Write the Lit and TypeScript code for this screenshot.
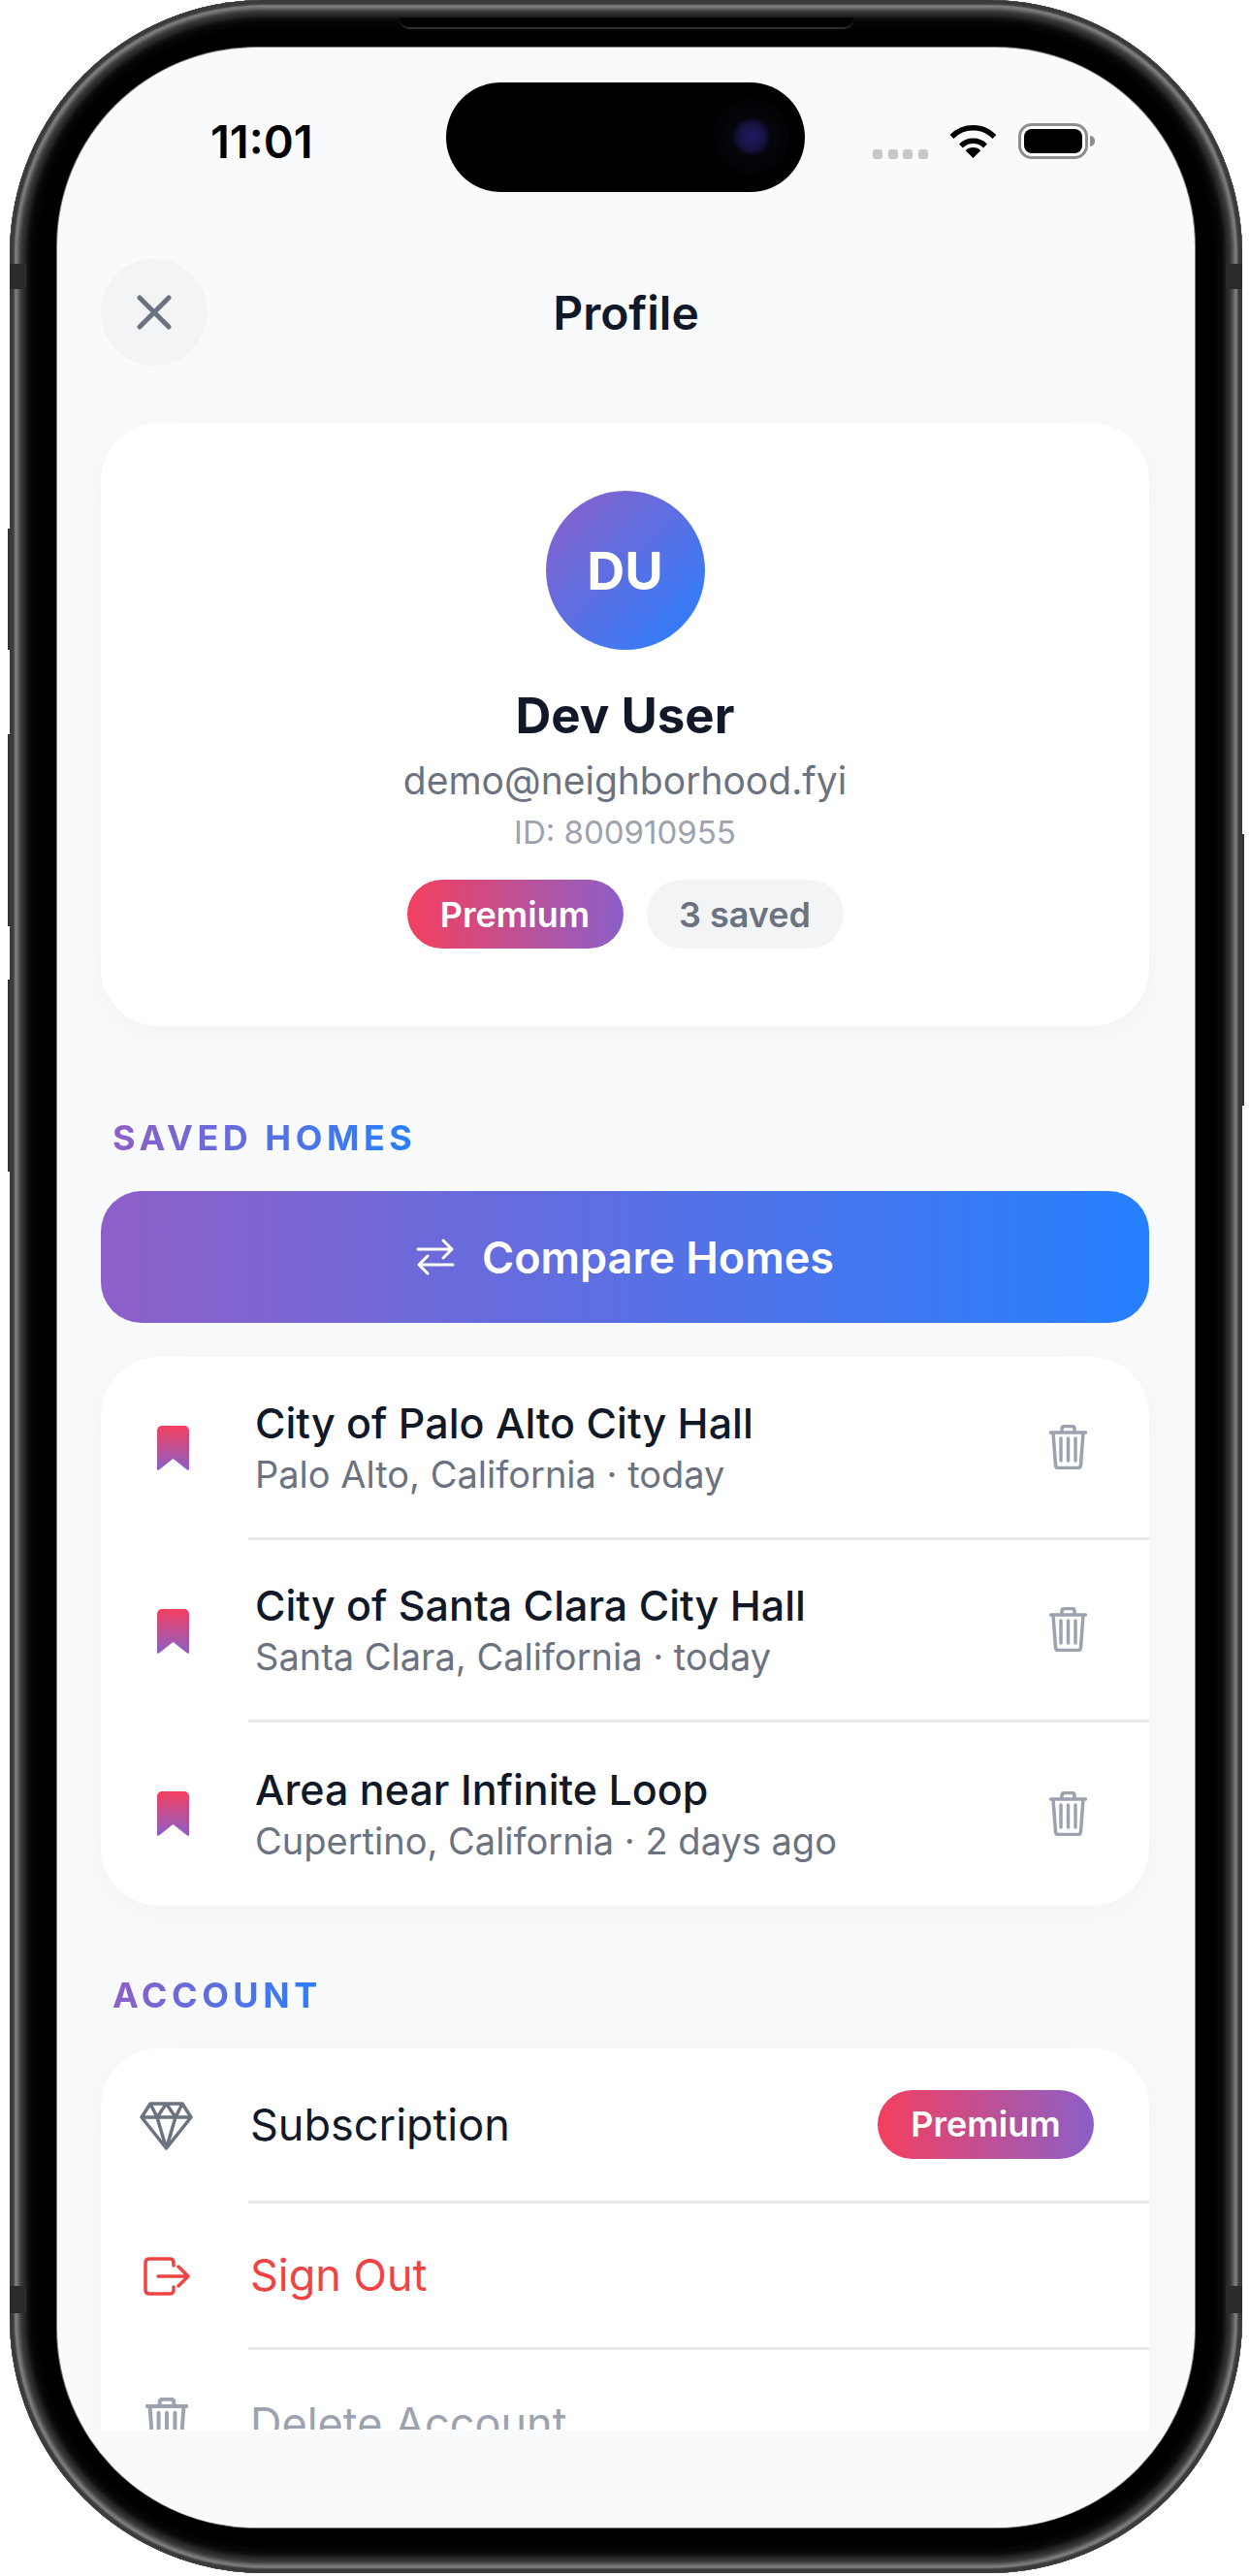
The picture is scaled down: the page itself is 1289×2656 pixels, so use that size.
import { LitElement, html, css, svg } from 'lit';
import { customElement } from 'lit/decorators.js';

const homes = [
  { name: 'City of Palo Alto City Hall', place: 'Palo Alto, California · today' },
  { name: 'City of Santa Clara City Hall', place: 'Santa Clara, California · today' },
  { name: 'Area near Infinite Loop', place: 'Cupertino, California · 2 days ago' },
];

const bookmark = (id: number) => html`
  <svg class="bookmark" viewBox="0 0 33 46" width="33" height="46">
    <defs>
      <linearGradient id="bm${id}" x1="0" y1="0" x2="0" y2="1">
        <stop offset="0" stop-color="#f43f5e"></stop>
        <stop offset="1" stop-color="#8b5fc8"></stop>
      </linearGradient>
    </defs>
    <path fill="url(#bm${id})" d="M5 0H28A5 5 0 0 1 33 5V44.5Q33 46.5 31 45.5L16.500 34L2 45.500Q0 46.500 0 44.500V5A5 5 0 0 1 5 0Z"></path>
  </svg>
`;

const trash = svg`
  <path d="M1.500 8H37.500M13 8V4.500Q13 1.500 16 1.500H23Q26 1.500 26 4.500V8M4 8L6.500 41.500Q6.700 44.500 9.500 44.500H29.500Q32.300 44.500 32.500 41.500L35 8M12 14V37M19.500 14V37M27 14V37"></path>
`;

@customElement('app-root')
class AppRoot extends LitElement {
  static styles = css`
    :host {
      display: block;
      width: 1289px;
      height: 2656px;
      background: #fff;
      font-family: Inter, 'Liberation Sans', sans-serif;
      color: #111827;
      overflow: hidden;
    }
    .frame {
      position: relative;
      box-sizing: border-box;
      width: 1271.5px;
      height: 2653px;
      margin-left: 9.5px;
      padding: 49px 49px 47px 49.5px;
      border-radius: 262px;
      background: #000;
      box-shadow:
        inset 0 0 2px 5px #3a3a3a,
        inset 0 0 4px 9px #8c8c8c,
        inset 0 0 5px 17px #343434,
        inset 0 0 6px 25px #0a0a0a;
    }
    .slit {
      position: absolute;
      left: 402px;
      top: 18px;
      width: 468px;
      height: 10px;
      background: #000;
      border-bottom: 2px solid #2e2e2e;
      border-radius: 0 0 10px 10px;
    }
    .band {
      position: absolute;
      width: 17px;
      background: #2a2a2a;
    }
    .side {
      position: absolute;
      width: 2px;
      background: #333;
    }
    .screen {
      display: flex;
      flex-direction: column;
      height: 100%;
      background: #f9fafb;
      border-radius: 205px;
      overflow: hidden;
      box-shadow: 0 0 0 1px #777;
    }
    .island {
      position: absolute;
      left: 450.5px;
      top: 85px;
      width: 370px;
      height: 113px;
      border-radius: 57px;
      background: #000;
    }
    .lens {
      position: absolute;
      left: 276px;
      top: 17px;
      width: 78px;
      height: 78px;
      border-radius: 50%;
      background: radial-gradient(circle, #231a63 0, #16123f 14px, #05050c 20px, #030305 39px);
    }
    .status {
      display: flex;
      align-items: flex-start;
      height: 121px;
      flex: none;
      padding: 78px 0 0 158px;
      box-sizing: border-box;
    }
    .time {
      font-size: 47px;
      line-height: 37px;
      font-weight: 600;
      color: #000;
      width: 683px;
    }
    .dots {
      display: flex;
      gap: 5.500px;
      margin-top: 27px;
      width: 79px;
    }
    .dots i {
      width: 10px;
      height: 10px;
      border-radius: 3px;
      background: #c7c7c7;
    }
    .wifi {
      flex: none;
      margin-right: 22px;
    }
    .battery {
      box-sizing: border-box;
      width: 72px;
      height: 37px;
      border: 3px solid #8e8e8e;
      border-radius: 14px;
      padding: 3px;
      background: #fff;
    }
    .battery b {
      display: block;
      height: 100%;
      border-radius: 8px;
      background: #000;
    }
    .nub {
      width: 5px;
      height: 11px;
      margin: 13px 0 0 2px;
      border-radius: 0 5px 5px 0;
      background: #8e8e8e;
    }
    .nav {
      display: flex;
      align-items: center;
      justify-content: center;
      position: relative;
      flex: none;
      height: 110px;
      margin-top: 97px;
    }
    .close {
      position: absolute;
      left: 45px;
      top: 0;
      display: flex;
      align-items: center;
      justify-content: center;
      width: 110px;
      height: 110px;
      border-radius: 50%;
      background: #f3f4f6;
    }
    .nav h1 {
      margin: 0;
      font-size: 48px;
      font-weight: 600;
    }
    .scroll {
      flex: 1;
      min-height: 0;
      overflow: hidden;
      padding: 59px 47px 0 45px;
    }
    .card {
      background: #fff;
      border-radius: 60px;
      box-shadow: 0 6px 30px rgba(17, 24, 39, 0.035);
    }
    .profile {
      display: flex;
      flex-direction: column;
      align-items: center;
      height: 622px;
      box-sizing: border-box;
      padding-top: 70px;
    }
    .avatar {
      display: flex;
      align-items: center;
      justify-content: center;
      width: 164px;
      height: 164px;
      border-radius: 50%;
      background: linear-gradient(135deg, #8e5fc8, #2680ff);
      color: #fff;
      font-size: 54px;
      font-weight: 700;
    }
    .name {
      margin-top: 37px;
      font-size: 51px;
      line-height: 62px;
      font-weight: 700;
    }
    .email {
      margin-top: 12px;
      font-size: 39px;
      line-height: 48px;
      color: #6b7280;
    }
    .id {
      margin-top: 9px;
      font-size: 33px;
      line-height: 40px;
      color: #9ca3af;
    }
    .chips {
      display: flex;
      gap: 24px;
      margin-top: 29px;
    }
    .chip {
      display: flex;
      align-items: center;
      justify-content: center;
      height: 71px;
      border-radius: 36px;
      font-size: 36px;
      font-weight: 600;
    }
    .chip.premium {
      width: 223px;
      background: linear-gradient(90deg, #f43f5e, #8b5fc8);
      color: #fff;
    }
    .chip.saved {
      width: 203px;
      background: #f3f4f6;
      color: #6b7280;
    }
    .label {
      display: inline-block;
      margin-left: 12px;
      font-size: 36px;
      line-height: 44px;
      font-weight: 700;
      letter-spacing: 4.500px;
      background: linear-gradient(90deg, #8e5fc8, #2680ff);
      -webkit-background-clip: text;
      background-clip: text;
      color: transparent;
    }
    .label.saved-label {
      margin-top: 93px;
      display: block;
      width: fit-content;
    }
    .label.account-label {
      margin-top: 70px;
      display: block;
      width: fit-content;
    }
    .compare {
      display: flex;
      align-items: center;
      justify-content: center;
      gap: 28px;
      height: 136px;
      margin-top: 33px;
      border-radius: 42px;
      background: linear-gradient(90deg, #8e5fc8, #2680ff);
      color: #fff;
      font-size: 45px;
      font-weight: 600;
    }
    .list {
      margin-top: 35px;
      overflow: hidden;
    }
    .home {
      display: flex;
      height: 188.500px;
    }
    .home .lead {
      display: flex;
      align-items: center;
      justify-content: center;
      flex: none;
      width: 152px;
      padding-right: 4px;
      box-sizing: border-box;
      padding-top: 0;
    }
    .home .body {
      display: flex;
      align-items: center;
      justify-content: space-between;
      flex: 1;
      padding: 0 64px 0 7px;
      border-bottom: 3px solid #e5e7eb;
    }
    .home:last-child .body {
      border-bottom: 0;
    }
    .home-name {
      font-size: 43px;
      line-height: 54px;
      font-weight: 500;
    }
    .home-place {
      margin-top: 2px;
      font-size: 38px;
      line-height: 48px;
      color: #6b7280;
    }
    .trash {
      fill: none;
      stroke: #9ca3af;
      stroke-width: 3.500;
      stroke-linecap: round;
      stroke-linejoin: round;
    }
    .account {
      margin-top: 33px;
    }
    .row {
      display: flex;
    }
    .row .lead {
      display: flex;
      align-items: center;
      justify-content: center;
      flex: none;
      width: 152px;
      padding-right: 17px;
      box-sizing: border-box;
    }
    .row .body {
      display: flex;
      align-items: center;
      justify-content: space-between;
      flex: 1;
      padding: 0 57px 0 2px;
      font-size: 45px;
      border-bottom: 3px solid #e5e7eb;
    }
    .row.sub {
      height: 160px;
    }
    .row.out {
      height: 151px;
    }
    .row.out .body {
      color: #ef4444;
    }
    .row.del {
      height: 151px;
    }
    .row.del .body {
      color: #9ca3af;
      border-bottom: 0;
    }
    .row-icon {
      fill: none;
      stroke-width: 3.500;
      stroke-linecap: round;
      stroke-linejoin: round;
    }
    .foot {
      flex: none;
      height: 101px;
      background: #f9fafb;
    }
  `;

  render() {
    return html`
      <div class="frame">
        <div class="slit"></div>
        <div class="band" style="left:0;top:272px;height:26px"></div>
        <div class="band" style="right:0;top:272px;height:26px"></div>
        <div class="band" style="left:0;top:2357px;height:28px"></div>
        <div class="band" style="right:0;top:2357px;height:28px"></div>
        <div class="side" style="left:-2px;top:545px;height:125px"></div>
        <div class="side" style="left:-2px;top:757px;height:198px"></div>
        <div class="side" style="left:-2px;top:1010px;height:198px"></div>
        <div class="side" style="right:-2px;top:860px;height:280px"></div>
        <div class="screen">
          <div class="status">
            <div class="time">11:01</div>
            <div class="dots"><i></i><i></i><i></i><i></i></div>
            <svg class="wifi" viewBox="0 0 49 36" width="49" height="36">
              <path d="M24.500 36L16.700 28.200A11 11 0 0 1 32.300 28.200Z" fill="#000"></path>
              <path d="M12 23.500A17.700 17.700 0 0 1 37 23.500" fill="none" stroke="#000" stroke-width="5.500"></path>
              <path d="M2.500 14A31 31 0 0 1 46.500 14" fill="none" stroke="#000" stroke-width="5.500"></path>
            </svg>
            <div class="battery"><b></b></div>
            <div class="nub"></div>
          </div>
          <div class="nav">
            <div class="close">
              <svg viewBox="0 0 36 36" width="36" height="36" fill="none" stroke="#6b7280" stroke-width="5" stroke-linecap="round">
                <path d="M3 3L33 33M33 3L3 33"></path>
              </svg>
            </div>
            <h1>Profile</h1>
          </div>
          <div class="scroll">
            <div class="card profile">
              <div class="avatar">DU</div>
              <div class="name">Dev User</div>
              <div class="email">demo@neighborhood.fyi</div>
              <div class="id">ID: 800910955</div>
              <div class="chips">
                <div class="chip premium">Premium</div>
                <div class="chip saved">3 saved</div>
              </div>
            </div>
            <div class="label saved-label">SAVED HOMES</div>
            <div class="compare">
              <svg viewBox="0 0 40 40" width="40" height="40" fill="none" stroke="#fff" stroke-width="3" stroke-linecap="round" stroke-linejoin="round">
                <path d="M2 12H37M28 3L37 12L28 21M38 28H3M12 19L3 28L12 37"></path>
              </svg>
              Compare Homes
            </div>
            <div class="card list">
              ${homes.map((home, i) => html`
                <div class="home">
                  <div class="lead">${bookmark(i)}</div>
                  <div class="body">
                    <div>
                      <div class="home-name">${home.name}</div>
                      <div class="home-place">${home.place}</div>
                    </div>
                    <svg class="trash" viewBox="0 0 39 46" width="39" height="46">${trash}</svg>
                  </div>
                </div>
              `)}
            </div>
            <div class="label account-label">ACCOUNT</div>
            <div class="card account">
              <div class="row sub">
                <div class="lead">
                  <svg class="row-icon" viewBox="0 0 55 50" width="55" height="50" stroke="#6b7280">
                    <path d="M11 2H44L53 16L27.500 48L2 16ZM2 16H53M11 2L18 16L27.500 2L37 16L44 2M18 16L27.500 48L37 16"></path>
                  </svg>
                </div>
                <div class="body">
                  <span>Subscription</span>
                  <div class="chip premium">Premium</div>
                </div>
              </div>
              <div class="row out">
                <div class="lead">
                  <svg class="row-icon" viewBox="0 0 48 40" width="48" height="40" stroke="#ef4444">
                    <path d="M31 9V6Q31 2 27 2H6Q2 2 2 6V34Q2 38 6 38H27Q31 38 31 34V31M15 20H46M36 10L46 20L36 30"></path>
                  </svg>
                </div>
                <div class="body">Sign Out</div>
              </div>
              <div class="row del">
                <div class="lead">
                  <svg class="trash" viewBox="0 0 39 46" width="44" height="52">${trash}</svg>
                </div>
                <div class="body">Delete Account</div>
              </div>
            </div>
          </div>
          <div class="foot"></div>
        </div>
        <div class="island"><div class="lens"></div></div>
      </div>
    `;
  }
}
